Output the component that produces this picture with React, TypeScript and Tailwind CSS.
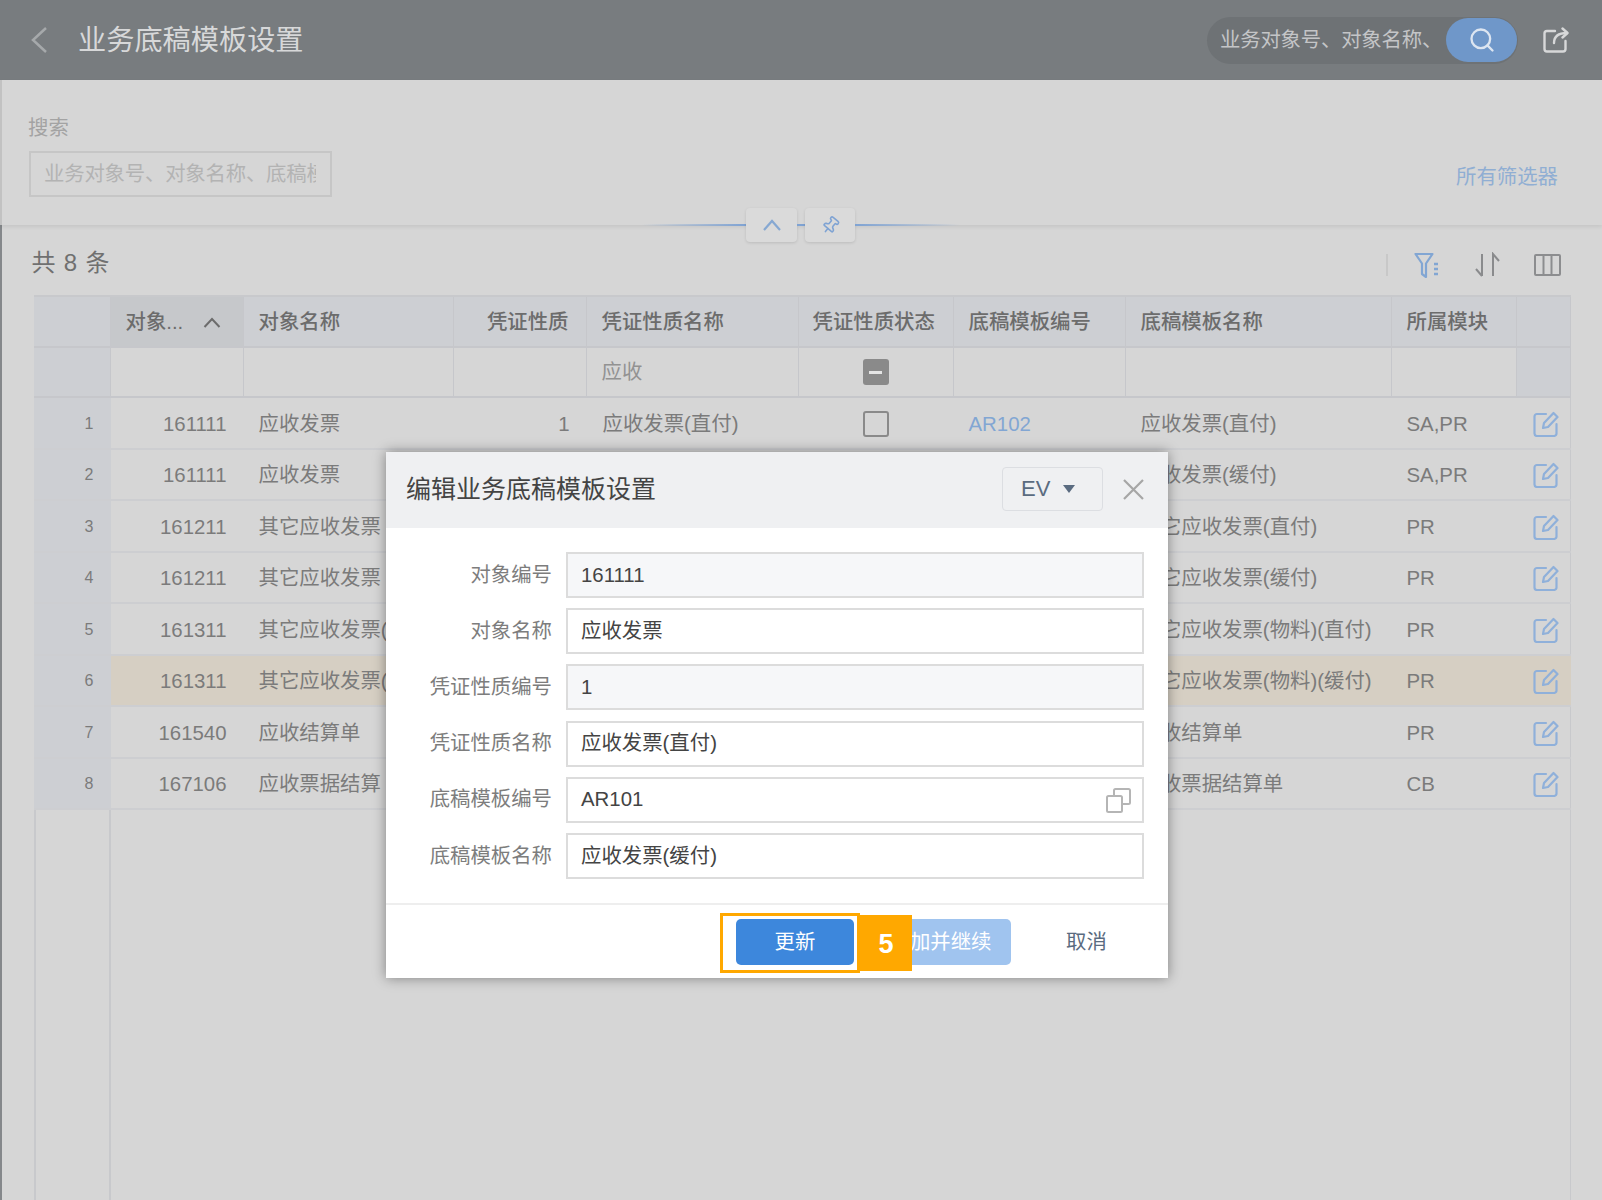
import { Pin, Search } from 'lucide-react'

const gridCols = 'grid grid-cols-[77px_133px_210px_133px_212px_155px_172px_266px_125px_54px]'

const rows = [
  { no: 1, code: '161111', name: '应收发票', type: '1', typeName: '应收发票(直付)', tpl: 'AR102', tplName: '应收发票(直付)', mod: 'SA,PR' },
  { no: 2, code: '161111', name: '应收发票', tplName: '应收发票(缓付)', mod: 'SA,PR' },
  { no: 3, code: '161211', name: '其它应收发票', tplName: '其它应收发票(直付)', mod: 'PR' },
  { no: 4, code: '161211', name: '其它应收发票', tplName: '其它应收发票(缓付)', mod: 'PR' },
  { no: 5, code: '161311', name: '其它应收发票(', tplName: '其它应收发票(物料)(直付)', mod: 'PR' },
  { no: 6, code: '161311', name: '其它应收发票(', tplName: '其它应收发票(物料)(缓付)', mod: 'PR' },
  { no: 7, code: '161540', name: '应收结算单', tplName: '应收结算单', mod: 'PR' },
  { no: 8, code: '167106', name: '应收票据结算', tplName: '应收票据结算单', mod: 'CB' },
]

const fields = [
  { label: '对象编号', value: '161111', readOnly: true },
  { label: '对象名称', value: '应收发票' },
  { label: '凭证性质编号', value: '1', readOnly: true },
  { label: '凭证性质名称', value: '应收发票(直付)' },
  { label: '底稿模板编号', value: 'AR101', copy: true },
  { label: '底稿模板名称', value: '应收发票(缓付)' },
]

function EditIcon() {
  return (
    <svg width="26" height="26" viewBox="0 0 26 26" fill="none" stroke="#8fb0da" strokeWidth="2.200" strokeLinecap="round" strokeLinejoin="round">
      <path d="M13 3H4a2.500 2.500 0 0 0-2.500 2.500v17A2.500 2.500 0 0 0 4 25h17a2.500 2.500 0 0 0 2.500-2.500V13" />
      <path d="M10 17l1-5 9.500-10 4 4L15 16z" />
    </svg>
  )
}

function HeaderCell({ children, right, active }: { children?: React.ReactNode; right?: boolean; active?: boolean }) {
  return (
    <div
      className={`flex items-center border-r border-[#c6c7cb] pt-[1px] text-[20.4px] text-[#6c6c6c] font-medium whitespace-nowrap ${
        right ? 'justify-end pr-[17px]' : 'pl-[15px]'
      } ${active ? 'bg-[#c6c8cb]' : ''}`}
    >
      {children}
    </div>
  )
}

function FilterCell({ children, side }: { children?: React.ReactNode; side?: boolean }) {
  return (
    <div className={`flex items-center border-r border-[#c6c7cb] pl-[15px] ${side ? 'bg-[#cdcfd3]' : ''}`}>{children}</div>
  )
}

export default function App() {
  return (
    <div className="relative h-[1200px] w-full overflow-hidden bg-[#d6d6d6] font-['Liberation_Sans','Noto_Sans_CJK_SC',sans-serif]">
      <header className="flex h-20 items-center bg-[#787c7f] pl-[30px] pr-[33px]">
        <svg width="18" height="28" viewBox="0 0 18 28" fill="none" stroke="#a6a9ab" strokeWidth="2.500">
          <path d="M16 2L3 14l13 12" />
        </svg>
        <h1 className="ml-[30px] text-[28.2px] text-[#d7d8d9] whitespace-nowrap">业务底稿模板设置</h1>
        <div className="ml-auto flex items-center gap-[25px]">
          <div className="flex h-[47px] w-[311px] items-center rounded-full bg-[#6e7275] pl-[13px] pr-[1px]">
            <span className="w-[226px] overflow-hidden whitespace-nowrap text-[20.4px] tracking-[-0.2px] text-[#c4c5c7]">业务对象号、对象名称、</span>
            <div className="ml-auto flex h-[44px] w-[71px] items-center justify-center rounded-full bg-[#6f97c9]">
              <Search size={28} strokeWidth={2} color="#dce5f1" />
            </div>
          </div>
          <svg width="26" height="26" viewBox="0 0 26 26" fill="none" stroke="#d7d8d9" strokeWidth="2.400" strokeLinecap="round" strokeLinejoin="round">
            <path d="M12 4H4a2.500 2.500 0 0 0-2.500 2.500V22A2.500 2.500 0 0 0 4 24.500h16a2.500 2.500 0 0 0 2.500-2.500v-8" />
            <path d="M11 16c0-6 4-10 13-10" />
            <path d="M19.500 1.500L24.500 6l-5 4.500" />
          </svg>
        </div>
      </header>

      <section className="relative flex h-[145px] justify-between border-l-2 border-[#c2c2c2] pl-[26px] pr-[44px] pt-[37px] shadow-[0_2px_4px_rgba(0,0,0,0.08)]">
        <div>
          <div className="text-[20.4px] leading-[22px] text-[#a3a3a3]">搜索</div>
          <div className="mt-[12px] ml-[1px] flex h-[46px] w-[303px] items-center overflow-hidden border-2 border-[#c6c6c6] pl-[13px] pr-[14px]">
            <span className="overflow-hidden whitespace-nowrap text-[20.4px] tracking-[-0.2px] text-[#b3b3b3]">业务对象号、对象名称、底稿模板编号</span>
          </div>
        </div>
        <a className="mt-[49px] text-[20.4px] leading-[22px] text-[#90aed3]">所有筛选器</a>

        <div className="absolute left-[640px] top-[128px] flex items-center">
          <div className="h-[2px] w-[104px] bg-linear-to-r from-transparent to-[#7fa3d3]" />
          <button className="flex h-[34px] w-[51px] items-center justify-center rounded bg-[#dadada] shadow-[0_1px_3px_rgba(0,0,0,0.12)]">
            <svg width="20" height="12" viewBox="0 0 20 12" fill="none" stroke="#86a8d2" strokeWidth="2.200">
              <path d="M2 11l8-9 8 9" />
            </svg>
          </button>
          <div className="h-[2px] w-[8px] bg-[#7fa3d3]" />
          <button className="flex h-[34px] w-[50px] items-center justify-center rounded bg-[#dadada] shadow-[0_1px_3px_rgba(0,0,0,0.12)]">
            <Pin size={19} strokeWidth={2} color="#7fa3d3" className="rotate-[40deg]" />
          </button>
          <div className="h-[2px] w-[105px] bg-linear-to-r from-[#7fa3d3] to-transparent" />
        </div>
      </section>

      <section className="border-l-2 border-[#85888b] pl-[31.5px]">
        <div className="flex h-[70px] items-center pt-[6px] pr-[41px]">
          <span className="-ml-[2px] text-[24px] tracking-[0.8px] text-[#707070]">共 8 条</span>
          <div className="ml-auto mt-[4px] flex items-center">
            <div className="h-[22px] w-[2px] bg-[#c8c8c8]" />
            <svg className="ml-[26px]" width="28" height="27" viewBox="0 0 28 27" fill="none" stroke="#82a6d3" strokeWidth="2.200" strokeLinejoin="round">
              <path d="M1.500 2h17l-6.500 9.500V25l-4-3V11.500z" />
              <path d="M20 12h4M20 17h4M20 22h4" strokeWidth="2.600" />
            </svg>
            <svg className="ml-[32px]" width="27" height="26" viewBox="0 0 27 26" fill="none" stroke="#8a8b8d" strokeWidth="2">
              <path d="M8 2v22M2 17l6 7" />
              <path d="M19 24V2l6 7" />
            </svg>
            <svg className="ml-[33px]" width="27" height="22" viewBox="0 0 27 22" fill="none" stroke="#8c8d8f" strokeWidth="2">
              <rect x="1" y="1" width="25" height="20" rx="1" />
              <path d="M9.500 1v20M17.500 1v20" />
            </svg>
          </div>
        </div>

        <div className="relative h-[905px] w-[1537px] border-t-2 border-[#c8c9cc]">
          <div className="absolute bottom-0 left-0 top-0 w-[77px] border-x-2 border-[#c8c9cc]" />
          <div className="absolute bottom-0 right-0 top-0 w-[1px] bg-[#c8c9cc]" />

          <div className={`relative ${gridCols} h-[51px] border-b-2 border-[#c6c7cb] bg-[#cdcfd3]`}>
            <HeaderCell />
            <HeaderCell active>
              <span>对象...</span>
              <svg className="ml-[20px]" width="18" height="11" viewBox="0 0 18 11" fill="none" stroke="#6c6c6c" strokeWidth="2">
                <path d="M1.500 10L9 2l7.500 8" />
              </svg>
            </HeaderCell>
            <HeaderCell>对象名称</HeaderCell>
            <HeaderCell right>凭证性质</HeaderCell>
            <HeaderCell>凭证性质名称</HeaderCell>
            <HeaderCell>
              <span className="-ml-[1px]">凭证性质状态</span>
            </HeaderCell>
            <HeaderCell>底稿模板编号</HeaderCell>
            <HeaderCell>底稿模板名称</HeaderCell>
            <HeaderCell>所属模块</HeaderCell>
            <HeaderCell />
          </div>

          <div className={`relative ${gridCols} h-[50px] border-b-2 border-[#c6c7cb] text-[20.4px] text-[#929292]`}>
            <FilterCell side />
            <FilterCell />
            <FilterCell />
            <FilterCell />
            <FilterCell>应收</FilterCell>
            <div className="flex items-center justify-center border-r border-[#c6c7cb]">
              <div className="flex h-[26px] w-[26px] items-center justify-center rounded-[3px] bg-[#8a8a8a]">
                <div className="h-[3px] w-[13px] bg-[#e4e4e4]" />
              </div>
            </div>
            <FilterCell />
            <FilterCell />
            <FilterCell />
            <FilterCell side />
          </div>

          {rows.map((r) => (
            <div
              key={r.no}
              className={`relative ${gridCols} h-[51.5px] items-center border-b-2 border-[#cdced1] text-[20.4px] text-[#7b7b7b] whitespace-nowrap ${
                r.no === 6 ? 'bg-[#d6cfc3]' : ''
              }`}
            >
              <div className="flex h-full items-center justify-end bg-[#cdcfd3] pr-[17px] pt-[2px] text-[16px]">{r.no}</div>
              <div className="pr-[17px] pt-[3px] text-right">{r.code}</div>
              <div className="overflow-hidden pl-[15px] pt-[3px]">{r.name}</div>
              <div className="pr-[17px] pt-[3px] text-right">{r.type}</div>
              <div className="overflow-hidden pl-[16px] pt-[3px]">{r.typeName}</div>
              <div className="flex justify-center pt-[2px]">
                {r.no === 1 && <div className="h-[26px] w-[26px] rounded-[3px] border-2 border-[#8a8a8a]" />}
              </div>
              <div className="pl-[15px] pt-[3px] text-[#82a6d3]">{r.tpl}</div>
              <div className="overflow-hidden pl-[15px] pt-[3px]">{r.tplName}</div>
              <div className="pl-[15px] pt-[3px]">{r.mod}</div>
              <div className="flex justify-center pl-[4px] pt-[2px]">
                <EditIcon />
              </div>
            </div>
          ))}
        </div>
      </section>

      <div className="absolute left-[386px] top-[452px] w-[782px] bg-white shadow-[0_0_12px_rgba(0,0,0,0.4)]">
        <div className="flex h-[76px] items-center bg-[#eff0f2] pl-[20px] pr-[24px]">
          <h2 className="text-[25px] text-[#444444] whitespace-nowrap">编辑业务底稿模板设置</h2>
          <div className="ml-auto -mt-[3px] flex h-[44px] w-[101px] items-center rounded border border-[#dcdee2] pl-[18px] text-[22px] text-[#5a6b80]">
            EV
            <svg className="ml-[13px]" width="12" height="8" viewBox="0 0 12 8" fill="#5a6b80">
              <path d="M0 0h12L6 8z" />
            </svg>
          </div>
          <svg className="ml-[20px] -mt-[2px]" width="21" height="21" viewBox="0 0 21 21" fill="none" stroke="#a6a6a6" strokeWidth="2.200">
            <path d="M1 1l19 19M20 1L1 20" />
          </svg>
        </div>

        <div className="flex flex-col gap-[10.2px] pt-[24px] pb-[24px] pr-[24px]">
          {fields.map((f) => (
            <div key={f.label} className="flex items-center">
              <label className="w-[166px] text-right text-[20.4px] text-[#7d7d7d]">{f.label}</label>
              <div
                className={`relative ml-[14px] flex h-[46px] flex-1 items-center border-2 border-[#dcdcdc] pl-[13px] text-[20.4px] text-[#444444] ${
                  f.readOnly ? 'bg-[#f6f7f9]' : 'bg-white'
                }`}
              >
                {f.value}
                {f.copy && (
                  <svg className="absolute right-[11px] top-[9px]" width="25" height="25" viewBox="0 0 25 25" fill="none" stroke="#b5b5b5" strokeWidth="2">
                    <rect x="1" y="8" width="15" height="16" rx="1.500" />
                    <path d="M8 8V2.500A1.500 1.500 0 0 1 9.500 1h13A1.500 1.500 0 0 1 24 2.500v12a1.500 1.500 0 0 1-1.500 1.500H16" />
                  </svg>
                )}
              </div>
            </div>
          ))}
        </div>

        <div className="relative flex h-[75px] items-start border-t-2 border-[#eeeeee] pl-[350px] pt-[14px]">
          <button className="h-[46px] w-[118px] rounded-[5px] bg-[#3d87dc] text-[20.4px] text-white">更新</button>
          <button className="ml-[16px] h-[46px] w-[141px] rounded-[5px] bg-[#a0c4ef] text-[20.4px] text-white">添加并继续</button>
          <button className="ml-[55px] h-[46px] text-[20.4px] text-[#5a6b80]">取消</button>

          <div className="absolute left-[334px] top-[8px] h-[60px] w-[140px] border-[3px] border-[#ffa800]" />
          <div className="absolute left-[474px] top-[10px] flex h-[56px] w-[52px] items-center justify-center bg-[#ffa800] pt-[3px] text-[27px] font-bold text-white">5</div>
        </div>
      </div>
    </div>
  )
}
